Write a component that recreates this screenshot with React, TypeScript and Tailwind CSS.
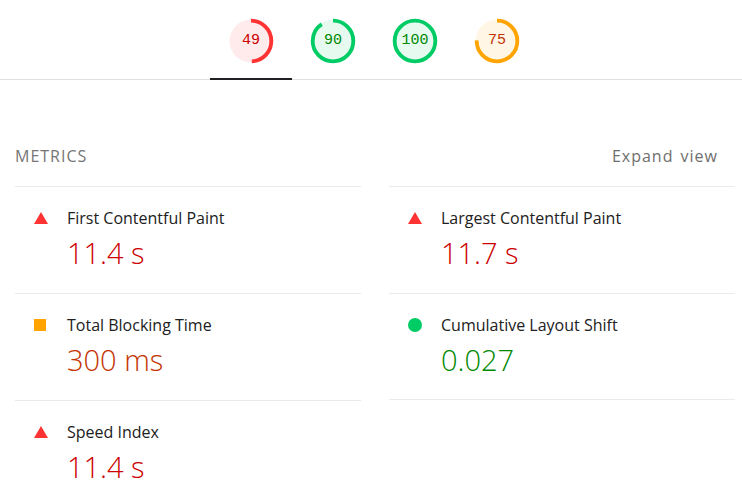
import React from "react";

type Gauge = { v: number; arc: string; bg: string; text: string };

const gauges: Gauge[] = [
  { v: 49, arc: "#ff3333", bg: "#ffebeb", text: "#cc0000" },
  { v: 90, arc: "#00cc66", bg: "#e6faf0", text: "#008800" },
  { v: 100, arc: "#00cc66", bg: "#e6faf0", text: "#008800" },
  { v: 75, arc: "#ffa400", bg: "#fff6e6", text: "#c33300" },
];

function GaugeIcon({ g }: { g: Gauge }) {
  const r = 53;
  const c = 2 * Math.PI * r;
  return (
    <div className="relative w-[46px] h-[46px]">
      <svg width="46" height="46" viewBox="0 0 120 120" className="block">
        <circle cx="60" cy="60" r="56" fill={g.bg} />
        <circle
          cx="60"
          cy="60"
          r={r}
          fill="none"
          stroke={g.arc}
          strokeWidth="10"
          strokeDasharray={`${(g.v / 100) * c} ${c}`}
          transform="rotate(-90 60 60)"
        />
      </svg>
      <div
        className="absolute inset-0 flex items-center justify-center text-[15px]"
        style={{ color: g.text, fontFamily: '"Liberation Mono", "DejaVu Sans Mono", monospace' }}
      >
        {g.v}
      </div>
    </div>
  );
}

type Metric = { title: string; value: string; kind: "fail" | "avg" | "pass" };

const left: Metric[] = [
  { title: "First Contentful Paint", value: "11.4 s", kind: "fail" },
  { title: "Total Blocking Time", value: "300 ms", kind: "avg" },
  { title: "Speed Index", value: "11.4 s", kind: "fail" },
];
const right: Metric[] = [
  { title: "Largest Contentful Paint", value: "11.7 s", kind: "fail" },
  { title: "Cumulative Layout Shift", value: "0.027", kind: "pass" },
];

function StatusIcon({ kind }: { kind: Metric["kind"] }) {
  if (kind === "fail")
    return (
      <svg width="14" height="12" viewBox="0 0 14 12" className="block">
        <polygon points="7,0 14,12 0,12" fill="#ff3333" />
      </svg>
    );
  if (kind === "avg") return <div className="w-[12px] h-[12px] bg-[#ffa400]" />;
  return <div className="w-[14px] h-[14px] rounded-full bg-[#00cc66]" />;
}

const valueColor: Record<Metric["kind"], string> = {
  fail: "text-[#cc0000]",
  avg: "text-[#c33300]",
  pass: "text-[#008800]",
};

function MetricCell({ m, last }: { m: Metric; last?: boolean }) {
  return (
    <div className={`h-[107px] border-t border-[#ebebeb] pt-[21px] pl-[19px] ${last ? "border-b" : ""}`}>
      <div className="flex items-center h-[20px]">
        <div className="w-[33px] flex items-center">
          <StatusIcon kind={m.kind} />
        </div>
        <div className="text-[16px] text-[#212121] leading-[20px]">{m.title}</div>
      </div>
      <div className={`pl-[33px] mt-[7px] text-[29px] font-[350] leading-[36px] ${valueColor[m.kind]}`}>
        {m.value}
      </div>
    </div>
  );
}

export default function App() {
  return (
    <div
      className="w-[742px] h-[504px] overflow-hidden bg-white"
      style={{ fontFamily: '"Open Sans", "Noto Sans", sans-serif' }}
    >
      <div className="h-[80px] border-b border-[#e0e0e0] flex justify-center pl-[6px]">
        {gauges.map((g, i) => (
          <div key={i} className="relative w-[82px] flex justify-center pt-[18px]">
            <GaugeIcon g={g} />
            {i === 0 && <span className="absolute left-0 right-0 bottom-[-1px] h-[2px] bg-[#202124]" />}
          </div>
        ))}
      </div>
      <div className="pl-[15px] pr-[7px] pt-[66px]">
        <div className="flex justify-between items-center h-[20px] mb-[20px]">
          <div className="text-[16px] text-[#757575] tracking-[1px]">METRICS</div>
          <div className="text-[16px] text-[#6e6e6e] tracking-[1px] [word-spacing:2px] mr-[17px]">Expand view</div>
        </div>
        <div className="grid grid-cols-2 gap-x-[28px]">
          <div>
            {left.map((m, i) => (
              <MetricCell key={i} m={m} />
            ))}
          </div>
          <div>
            {right.map((m, i) => (
              <MetricCell key={i} m={m} last={i === right.length - 1} />
            ))}
          </div>
        </div>
      </div>
    </div>
  );
}
